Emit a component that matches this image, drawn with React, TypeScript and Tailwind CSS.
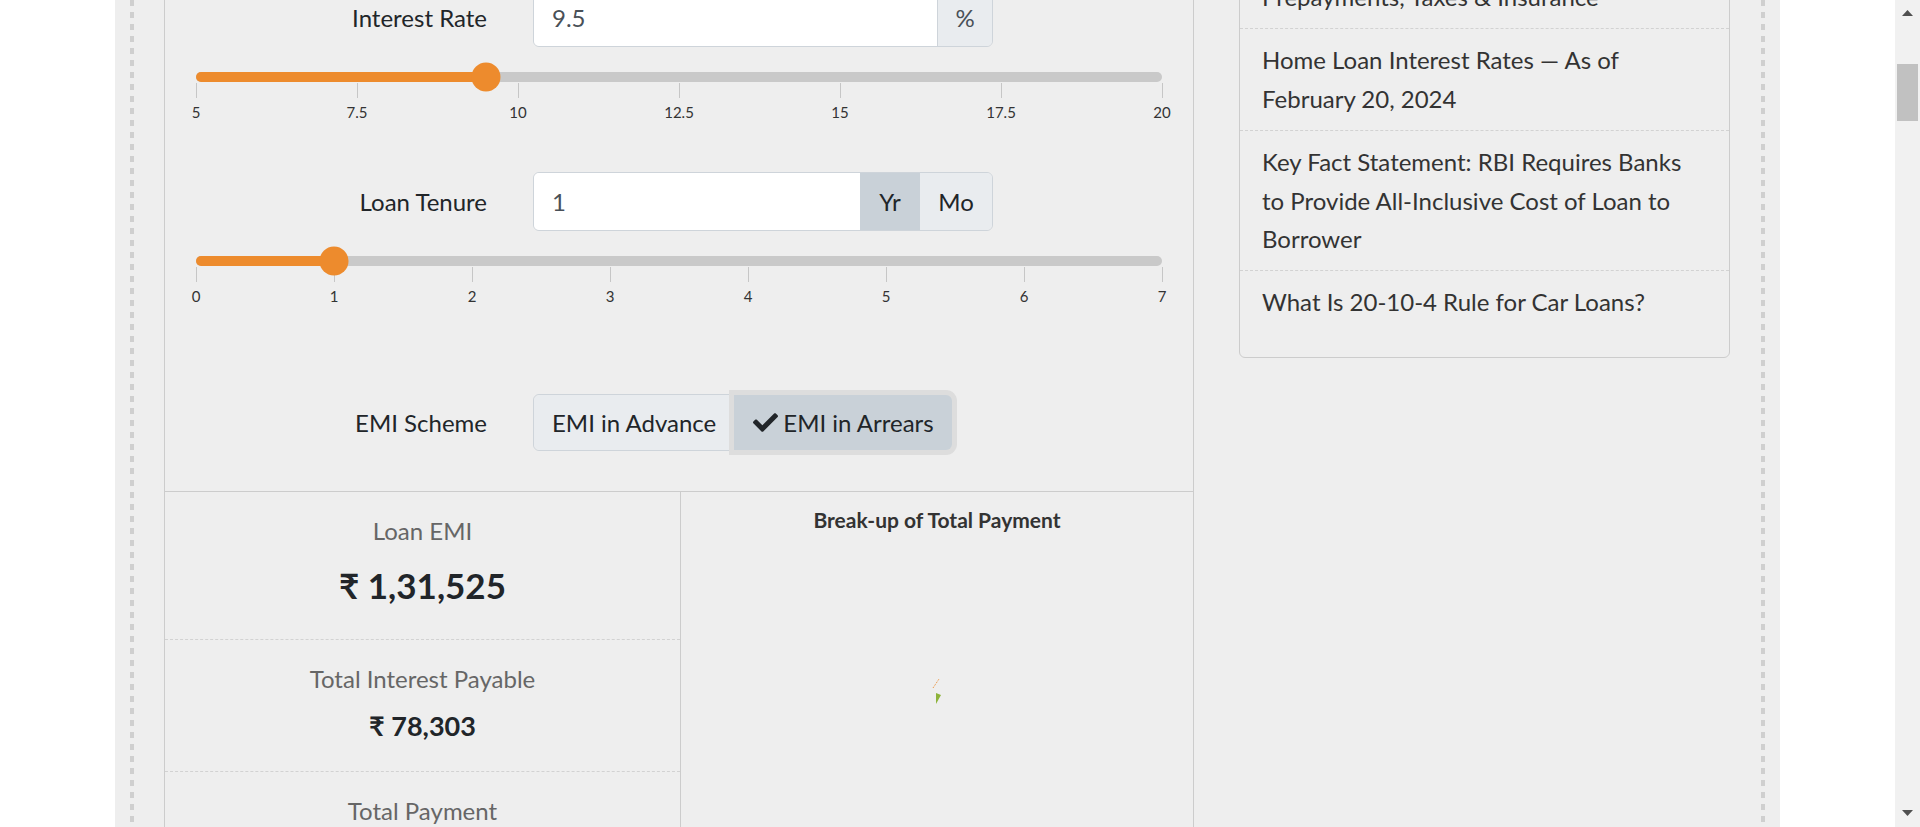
import React from 'react';

const interestTicks = ['5', '7.5', '10', '12.5', '15', '17.5', '20'];
const tenureTicks = ['0', '1', '2', '3', '4', '5', '6', '7'];

const articles = [
  'Prepayments, Taxes & Insurance',
  'Home Loan Interest Rates — As of February 20, 2024',
  'Key Fact Statement: RBI Requires Banks to Provide All-Inclusive Cost of Loan to Borrower',
  'What Is 20-10-4 Rule for Car Loans?',
];

function DashedRule() {
  return (
    <div className="h-full w-[4px] shrink-0 bg-[image:repeating-linear-gradient(to_bottom,#cfcfcf_0px,#cfcfcf_6px,transparent_6px,transparent_12px)]" />
  );
}

function Slider({ ticks, pct }: { ticks: string[]; pct: number }) {
  return (
    <div className="ml-[31px] w-[966px]">
      <div className="relative h-[10px] rounded-full bg-[#c9c9c9]">
        <div className="h-full rounded-full bg-[#ed8b2d]" style={{ width: `${pct}%` }} />
        <div
          className="absolute top-1/2 h-[29px] w-[29px] -translate-x-1/2 -translate-y-1/2 rounded-full bg-[#ed8b2d]"
          style={{ left: `${pct}%` }}
        />
      </div>
      <div className="mt-px flex justify-between">
        {ticks.map((t) => (
          <div key={t} className="flex w-0 flex-col items-center">
            <div className="h-[15px] w-px shrink-0 bg-[#c6c6c6]" />
            <div className="mt-[5px] whitespace-nowrap text-[15px] leading-[18px] text-[#333]">{t}</div>
          </div>
        ))}
      </div>
    </div>
  );
}

function FieldRow({ label, children }: { label: string; children: React.ReactNode }) {
  return (
    <div className="flex items-center">
      <div className="w-[322px] text-right text-[24px] text-[#212529]">{label}</div>
      <div className="ml-[46px]">{children}</div>
    </div>
  );
}

function CheckIcon() {
  return (
    <svg viewBox="0 0 512 512" className="h-[25px] w-[25px] fill-[#212529]">
      <path d="M173.898 439.404l-166.4-166.4c-9.997-9.997-9.997-26.206 0-36.204l36.203-36.204c9.997-9.998 26.207-9.998 36.204 0L192 312.69 432.095 72.596c9.997-9.997 26.207-9.997 36.204 0l36.203 36.204c9.997 9.997 9.997 26.206 0 36.204l-294.4 294.401c-9.998 9.997-26.207 9.997-36.204-.001z" />
    </svg>
  );
}

function Calculator() {
  return (
    <div className="-mt-[12px] w-[1030px] shrink-0 border-x border-[#cccccc]">
      {/* inputs */}
      <div className="pb-[40px]">
        <FieldRow label="Interest Rate">
          <div className="flex h-[59px] w-[460px] overflow-hidden rounded-[6px] border border-[#ced4da] text-[24px]">
            <div className="flex flex-1 items-center bg-white pl-[18px] text-[#495057]">9.5</div>
            <div className="flex w-[55px] items-center justify-center border-l border-[#ced4da] bg-[#e9ecef] text-[#495057]">%</div>
          </div>
        </FieldRow>
        <div className="mt-[25px]">
          <Slider ticks={interestTicks} pct={30} />
        </div>

        <div className="mt-[51px]">
          <FieldRow label="Loan Tenure">
            <div className="flex h-[59px] w-[460px] overflow-hidden rounded-[6px] border border-[#ced4da] text-[24px]">
              <div className="flex flex-1 items-center bg-white pl-[18px] text-[#495057]">1</div>
              <div className="flex w-[60px] items-center justify-center bg-[#c9d1d8] text-[#212529]">Yr</div>
              <div className="flex w-[72px] items-center justify-center bg-[#e9ecef] text-[#212529]">Mo</div>
            </div>
          </FieldRow>
        </div>
        <div className="mt-[25px]">
          <Slider ticks={tenureTicks} pct={100 / 7} />
        </div>

        <div className="mt-[89px]">
          <FieldRow label="EMI Scheme">
            <div className="flex h-[57px] rounded-[6px] border border-[#ced4da] text-[24px] text-[#212529]">
              <div className="flex items-center rounded-l-[6px] bg-[#e9ecef] px-[18px]">EMI in Advance</div>
              <div className="relative z-10 flex items-center gap-[5px] rounded-r-[6px] bg-[#c9d1d8] pl-[19px] pr-[18px] shadow-[0_0_0_5px_#dddddd]">
                <CheckIcon />
                <span>EMI in Arrears</span>
              </div>
            </div>
          </FieldRow>
        </div>
      </div>

      {/* results */}
      <div className="flex border-t border-[#cccccc]">
        <div className="w-[516px] shrink-0 border-r border-[#cccccc] text-center">
          <div className="border-b border-dashed border-[#d2d2d2] pb-[32px] pt-[21px]">
            <div className="text-[24px] leading-[36px] text-[#666666]">Loan EMI</div>
            <div className="mt-[14px] text-[35px] font-bold leading-[44px] text-[#212529]">₹ 1,31,525</div>
          </div>
          <div className="border-b border-dashed border-[#d2d2d2] pb-[28px] pt-[21px]">
            <div className="text-[24px] leading-[36px] text-[#666666]">Total Interest Payable</div>
            <div className="mt-[12px] text-[27px] font-bold leading-[34px] text-[#212529]">₹ 78,303</div>
          </div>
          <div className="pb-[28px] pt-[21px]">
            <div className="text-[24px] leading-[36px] text-[#666666]">Total Payment</div>
            <div className="mt-[12px] text-[27px] font-bold leading-[34px] text-[#212529]">₹ 2,28,303</div>
          </div>
        </div>
        <div className="flex-1 pt-[15px] text-center">
          <div className="text-[21px] font-bold leading-[26px] text-[#333333]">Break-up of Total Payment</div>
          <svg width="512" height="280" viewBox="0 0 512 280" className="block">
            <line x1="252" y1="155" x2="258" y2="146" stroke="#ed8b2d" strokeWidth="1" strokeDasharray="1 1" />
            <polygon points="255,160 260,162 255,171" fill="#8db33a" />
          </svg>
        </div>
      </div>
    </div>
  );
}

function Sidebar() {
  return (
    <div className="-mt-[35px] w-[491px] shrink-0 rounded-b-[6px] border border-[#cccccc] pb-[23px]">
      {articles.map((a, i) => (
        <div
          key={a}
          className={
            i < articles.length - 1
              ? 'border-b border-dashed border-[#d2d2d2] px-[22px] py-[12px] text-[24px] leading-[38.4px] text-[#333333]'
              : 'px-[22px] py-[12px] text-[24px] leading-[38.4px] text-[#333333]'
          }
        >
          {a}
        </div>
      ))}
    </div>
  );
}

function Scrollbar() {
  return (
    <div className="flex h-full w-[25px] shrink-0 flex-col items-center bg-[#f1f1f1]">
      <svg width="11" height="6" viewBox="0 0 11 6" className="mt-[10px]">
        <polygon points="5.5,0 11,6 0,6" fill="#505050" />
      </svg>
      <div className="mt-[48px] h-[57px] w-[21px] bg-[#c1c1c1]" />
      <div className="flex-1" />
      <svg width="11" height="6" viewBox="0 0 11 6" className="mb-[11px]">
        <polygon points="0,0 11,0 5.5,6" fill="#505050" />
      </svg>
    </div>
  );
}

export default function App() {
  return (
    <div className="flex h-[827px] w-full overflow-hidden bg-white font-['Lato','Liberation_Sans',sans-serif]">
      <div className="flex h-full flex-1 justify-center overflow-hidden">
        <div className="flex h-full w-[1665px] shrink-0 bg-[#eeeeee] px-[15px]">
          <DashedRule />
          <div className="flex flex-1 items-start overflow-hidden pl-[30px]">
            <Calculator />
            <div className="ml-[45px]">
              <Sidebar />
            </div>
          </div>
          <DashedRule />
        </div>
      </div>
      <Scrollbar />
    </div>
  );
}
